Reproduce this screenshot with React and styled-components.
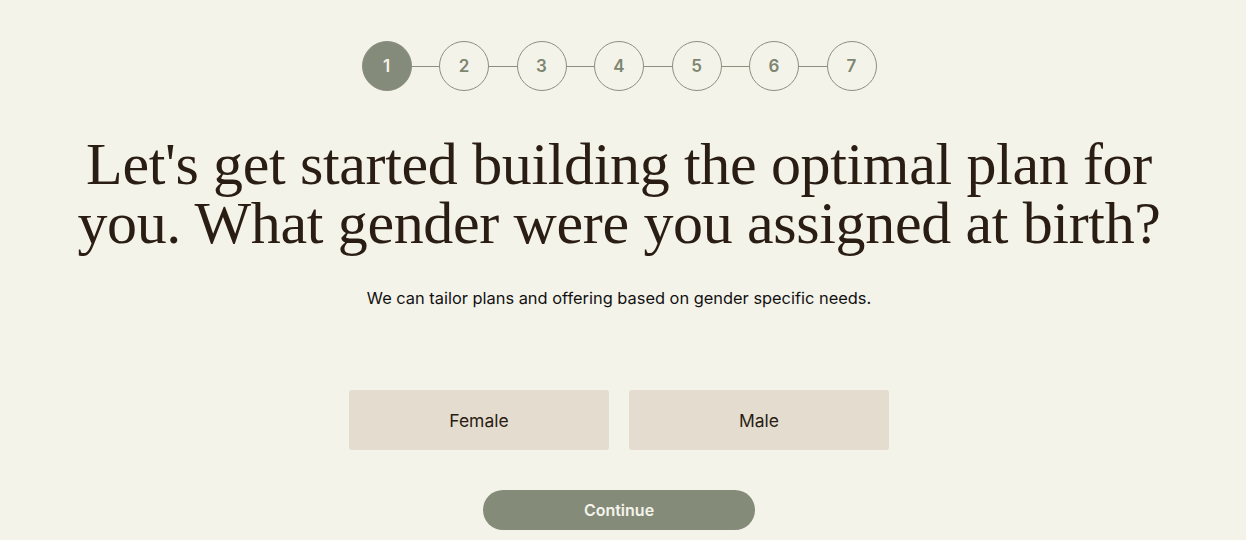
import React from "react";
import styled, { createGlobalStyle } from "styled-components";

const Global = createGlobalStyle`
  html, body { margin: 0; padding: 0; background: #f4f3ea; }
  body { font-family: Inter, "Liberation Sans", sans-serif; }
`;

const Page = styled.main`
  display: flex;
  flex-direction: column;
  align-items: center;
  padding: 41px 8px 0 0;
  min-height: 540px;
  box-sizing: border-box;
`;

const Stepper = styled.div`
  display: flex;
  align-items: center;
`;

const Step = styled.div`
  width: 50px;
  height: 50px;
  box-sizing: border-box;
  border-radius: 50%;
  border: 1px solid #8a8f80;
  background: ${(p) => (p.$active ? "#858b7a" : "transparent")};
  color: ${(p) => (p.$active ? "#f4f3ea" : "#7d8671")};
  display: flex;
  align-items: center;
  justify-content: center;
  font-size: 17px;
  font-weight: 600;
`;

const Line = styled.div`
  width: 27.5px;
  height: 1px;
  background: #8a8f80;
`;

const Heading = styled.h1`
  margin: 44px 0 0;
  font-family: "Liberation Serif", serif;
  font-weight: 400;
  font-size: 60px;
  line-height: 59px;
  color: #2a1d14;
  text-align: center;
  letter-spacing: -0.35px;
`;

const Sub = styled.p`
  margin: 35px 0 0;
  font-size: 16.4px;
  line-height: 20px;
  color: #111;
`;

const Options = styled.div`
  display: flex;
  gap: 20px;
  margin-top: 82px;
`;

const Option = styled.button`
  width: 260px;
  height: 60px;
  border: none;
  border-radius: 3px;
  background: #e3dccf;
  font-family: inherit;
  font-size: 17.5px;
  color: #2a1d14;
`;

const Continue = styled.button`
  margin-top: 40px;
  width: 272px;
  height: 40px;
  border: none;
  border-radius: 20px;
  background: #848b79;
  color: #f4f3ea;
  font-family: inherit;
  font-size: 16px;
  font-weight: 600;
`;

export default function App() {
  const steps = [1, 2, 3, 4, 5, 6, 7];
  return (
    <>
      <Global />
      <Page>
        <Stepper>
          {steps.map((n, i) => (
            <React.Fragment key={n}>
              {i > 0 && <Line />}
              <Step $active={n === 1}>{n}</Step>
            </React.Fragment>
          ))}
        </Stepper>
        <Heading>
          Let's get started building the optimal plan for
          <br />
          you. What gender were you assigned at birth?
        </Heading>
        <Sub>We can tailor plans and offering based on gender specific needs.</Sub>
        <Options>
          <Option>Female</Option>
          <Option>Male</Option>
        </Options>
        <Continue>Continue</Continue>
      </Page>
    </>
  );
}
